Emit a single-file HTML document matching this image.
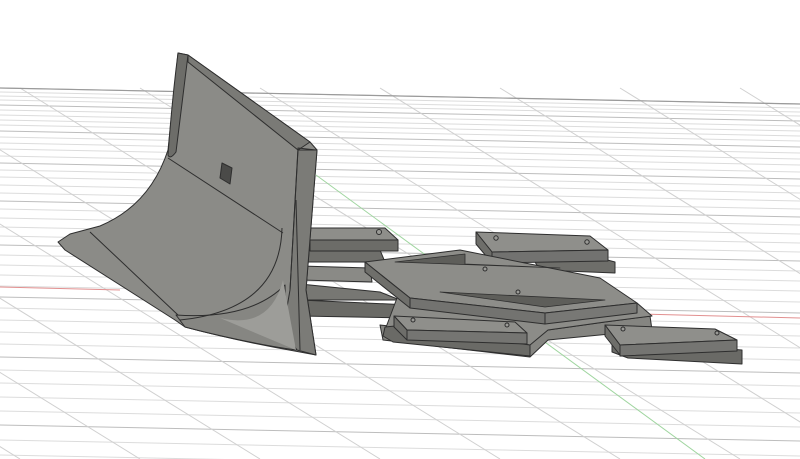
<!DOCTYPE html>
<html><head><meta charset="utf-8"><style>html,body{margin:0;padding:0;background:#fff;overflow:hidden}svg{display:block}</style></head>
<body>
<svg width="800" height="459" viewBox="0 0 800 459" xmlns="http://www.w3.org/2000/svg">
<rect width="800" height="459" fill="#fff"/>
<g stroke="#dcdcdc" stroke-width="1">
<path d="M0 92L800 108M0 96L800 112M0 100L800 116M0 110L800 126M0 115L800 131M0 120L800 136M0 125L800 141M0 137L800 153M0 143L800 159M0 149L800 165M0 156L800 172M0 170L800 186M0 177L800 193M0 185L800 201M0 193L800 209M0 209L800 225M0 218L800 234M0 227L800 243M0 236L800 252M0 255L800 271M0 265L800 281M0 275L800 291M0 286L800 302M0 308L800 324M0 320L800 336M0 332L800 348M0 344L800 360M0 370L800 386M0 383L800 399M0 397L800 413M0 411L800 427M0 440L800 456M0 455L800 471"/>
</g>
<g stroke="#bdbdbd" stroke-width="1">
<path d="M0 88L800 104M0 105L800 121M0 131L800 147M0 163L800 179M0 201L800 217M0 245L800 261M0 297L800 313M0 357L800 373M0 425L800 441"/>
</g>
<g stroke="#d0d0d0" stroke-width="1">
<path d="M-700 88L-100 459M-580 88L20 459M-460 88L140 459M-340 88L260 459M-220 88L380 459M-100 88L500 459M20 88L620 459M140 88L740 459M260 88L860 459M380 88L980 459M500 88L1100 459M620 88L1220 459M740 88L1340 459"/>
</g>
<path d="M0 88L800 104" stroke="#9a9a9a" stroke-width="1.2"/>
<path d="M0 287L120 290M560 312L800 318" stroke="#e29090" stroke-width="1"/>
<path d="M316 175L705 459" stroke="#9fd59f" stroke-width="1"/>

<g stroke="#2e2e2e" stroke-width="1" stroke-linejoin="round">
<!-- back bars of bracket -->
<polygon points="300,248 380,250 385,262 300,262" fill="#6f6f6b"/>
<polygon points="300,266 370,268 372,282 300,280" fill="#8a8a86"/>
<polygon points="300,284 380,292 400,300 300,300" fill="#777773"/>
<polygon points="300,300 410,305 410,318 300,316" fill="#6a6a66"/>
<!-- arm 1 -->
<polygon points="305,228 385,228 398,240 310,240" fill="#8e8e8a"/>
<polygon points="310,240 398,240 398,251 310,251" fill="#6c6c68"/>
<circle cx="379" cy="232" r="2.5" fill="#9a9a96"/>
<!-- base plate -->
<polygon points="380,325 530,340 548,330 605,322 650,316 652,330 548,340 530,357 383,340" fill="#858581"/>
<polygon points="400,290 545,316 637,303 652,316 605,322 548,330 530,345 385,330" fill="#8c8c88"/>
<!-- top right block -->
<polygon points="535,262 600,258 615,262 615,273 540,270" fill="#6e6e6a"/>
<polygon points="476,232 590,236 608,250 492,252" fill="#8f8f8b"/>
<polygon points="476,232 492,252 492,263 476,244" fill="#6e6e6a"/>
<polygon points="492,252 608,250 608,261 492,263" fill="#727270"/>
<circle cx="496" cy="238" r="2.2" fill="#9a9a96"/><circle cx="587" cy="242" r="2.2" fill="#9a9a96"/>
<!-- central plate -->
<polygon points="365,262 460,250 600,278 637,303 545,313 410,298" fill="#8d8d89"/>
<polygon points="365,262 410,298 410,308 365,272" fill="#6f6f6b"/>
<polygon points="410,298 545,313 545,324 410,308" fill="#737370"/>
<polygon points="545,313 637,303 637,313 545,324" fill="#787875"/>
<polygon points="395,262 465,254 465,264 560,268" fill="#5e5e5a" stroke-width="0.8"/>
<polygon points="440,292 605,300 545,307" fill="#5e5e5a" stroke-width="0.8"/>
<circle cx="485" cy="269" r="2" fill="#9a9a96"/><circle cx="518" cy="292" r="2" fill="#9a9a96"/>
<!-- bottom-left block -->
<polygon points="385,327 395,326 530,345 530,356 393,342 383,336" fill="#6a6a66"/>
<polygon points="394,316 515,322 527,333 407,330" fill="#8f8f8b"/>
<polygon points="394,316 407,330 407,340 394,327" fill="#6e6e6a"/>
<polygon points="407,330 527,333 527,344 407,340" fill="#757572"/>
<circle cx="413" cy="320" r="2" fill="#9a9a96"/><circle cx="507" cy="325" r="2" fill="#9a9a96"/>
<!-- bottom-right block -->
<polygon points="612,340 742,350 742,364 628,358 612,352" fill="#6a6a66"/>
<polygon points="605,325 715,329 737,340 620,345" fill="#8f8f8b"/>
<polygon points="605,325 620,345 620,355 605,336" fill="#6e6e6a"/>
<polygon points="620,345 737,340 737,351 620,356" fill="#757572"/>
<circle cx="623" cy="329" r="2" fill="#9a9a96"/><circle cx="717" cy="333" r="2" fill="#9a9a96"/>

<!-- plow -->
<path d="M178 53 L188 55 L310 142 L317 150 L306 290 L316 355 L300 352 C260 345 215 335 185 327 L175 320 L65 250 L58 242 L70 234 L100 226 Q150 205 168 150 Z" fill="#8b8b87"/>
<path d="M178 53 L188 55 L176 152 Q170 160 168 155 Q172 100 178 53Z" fill="#6d6d69"/>
<path d="M188 55 L310 142 L298 150 L188 62Z" fill="#7a7a76"/>
<path d="M298 150 L317 150 L306 290 L316 355 L297 350 L283 330 L290 290 Z" fill="#7b7b77"/>
<path d="M176 315 Q250 320 285 285 Q285 320 296 350 C260 345 215 335 185 327 Z" fill="#868682"/>
<path d="M220 318 Q270 330 283 280 L296 350 Z" fill="#9d9d99" stroke="none"/>
<path d="M168 158 L283 233" fill="none"/>
<path d="M90 232 L178 315" fill="none"/>
<path d="M282 228 Q280 310 180 320" fill="none"/>
<path d="M296 200 L300 350" fill="none"/>
<path d="M316 150 L298 148 L290 290" fill="none"/>
<path d="M222 163 L232 168 L230 184 L220 178Z" fill="#4a4a48"/>
</g>
</svg>
</body></html>
